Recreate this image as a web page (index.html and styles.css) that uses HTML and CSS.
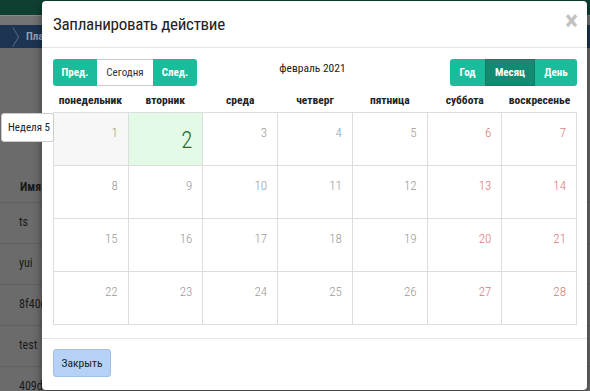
FILE: index.html
```html
<!DOCTYPE html>
<html lang="ru">
<head>
    <meta charset="UTF-8">
    <title>Запланировать действие</title>
    <link rel="stylesheet" href="styles.css">
</head>
<body>
    <!-- Page behind the dialog (dimmed) -->
    <div class="page">
        <div class="topbar"></div>
        <div class="subbar"></div>
        <div class="crumbs">
            <span class="crumb-arrow"></span>
            <span class="crumb-text">Планировщик</span>
        </div>
        <div class="list">
            <div class="list-head">Имя</div>
            <div class="list-row">ts</div>
            <div class="list-row">yui</div>
            <div class="list-row">8f40d</div>
            <div class="list-row">test</div>
            <div class="list-row">409d</div>
        </div>
    </div>

    <!-- Dialog -->
    <div class="modal">
        <div class="modal-header">
            <h4 class="modal-title">Запланировать действие</h4>
            <span class="modal-close">&times;</span>
        </div>

        <div class="modal-body">
            <div class="toolbar">
                <div class="btn-group">
                    <button class="btn btn-teal w-prev">Пред.</button>
                    <button class="btn btn-plain w-today">Сегодня</button>
                    <button class="btn btn-teal w-prev">След.</button>
                </div>
                <div class="cal-title">февраль 2021</div>
                <div class="btn-group">
                    <button class="btn btn-teal w-year">Год</button>
                    <button class="btn btn-teal active w-month">Месяц</button>
                    <button class="btn btn-teal w-day">День</button>
                </div>
            </div>

            <div class="weekdays">
                <div>понедельник</div>
                <div>вторник</div>
                <div>среда</div>
                <div>четверг</div>
                <div>пятница</div>
                <div>суббота</div>
                <div>воскресенье</div>
            </div>

            <div id="month" class="month"></div>
        </div>

        <div class="modal-footer">
            <button class="btn-close">Закрыть</button>
        </div>
    </div>

    <!-- week tooltip sits above the dialog edge -->
    <div class="week-tip">Неделя 5</div>

    <script>
        // February 2021 starts on Monday, 28 days
        const month = document.getElementById('month');
        for (let d = 1; d <= 28; d++) {
            const col = (d - 1) % 7;
            let cls = 'day';
            if (d === 1) cls += ' past';
            if (d === 2) cls += ' today';
            if (col >= 5) cls += ' weekend';
            month.innerHTML += `<div class="${cls}"><span class="num">${d}</span></div>`;
        }
    </script>
</body>
</html>
```

FILE: styles.css
```css
:root {
    --teal: #1bbc9b;
    --teal-dark: #148a73;
    --cell-border: #dddddd;
    --num: #9a9a9a;
    --weekend: #d9777a;
}

* {
    margin: 0;
    padding: 0;
    box-sizing: border-box;
}

body {
    width: 590px;
    height: 391px;
    overflow: hidden;
    position: relative;
    font-family: 'Roboto Condensed', 'Ubuntu Condensed', Roboto, 'Liberation Sans', sans-serif;
    color: #333;
    background-color: #6b6b6b;
}

/* ---------- dimmed page ---------- */

.page {
    height: 391px;
    overflow: hidden;
    background-color: #6b6b6b;
}

.topbar {
    height: 15px;
    background-color: #0f3f33;
}

.subbar {
    height: 10px;
    background-color: #737373;
    border-top: 1px solid #8a8a8a;
}

.crumbs {
    height: 23px;
    background-color: #1d3552;
    display: flex;
    align-items: center;
    color: #8fa0b5;
    font-size: 11px;
    font-weight: bold;
    padding-left: 6px;
}

.crumb-arrow {
    width: 14px;
    height: 14px;
    border-top: 1px solid #5c7591;
    border-right: 1px solid #5c7591;
    transform: scaleX(0.6) rotate(45deg);
    margin-right: 6px;
}

.list {
    padding-top: 120px;
    color: #1a1a1a;
    font-size: 12px;
}

.list-head {
    font-weight: bold;
    padding-left: 20px;
    height: 34px;
    line-height: 38px;
}

.list-row {
    height: 41px;
    line-height: 39px;
    padding-left: 19px;
    border-top: 1px solid #606060;
}

.week-tip {
    position: absolute;
    left: 1px;
    top: 113px;
    width: 53px;
    height: 29px;
    background-color: #fff;
    border: 1px solid #ccc;
    border-radius: 3px;
    font-size: 11px;
    line-height: 27px;
    padding-left: 6px;
    white-space: nowrap;
    overflow: hidden;
    color: #222;
}

/* ---------- modal ---------- */

.modal {
    position: absolute;
    left: 42px;
    top: 1px;
    width: 545px;
    height: 389px;
    background-color: #fff;
    border-radius: 4px;
    box-shadow: 0 3px 9px rgba(0, 0, 0, 0.5);
}

.modal-header {
    height: 47px;
    border-bottom: 1px solid #e5e5e5;
    display: flex;
    align-items: center;
    justify-content: space-between;
    padding: 0 9px 0 11px;
}

.modal-title {
    font-size: 17px;
    font-weight: normal;
    letter-spacing: -0.3px;
    color: #222;
    margin-top: -1px;
}

.modal-close {
    font-size: 28px;
    font-weight: bold;
    line-height: 1;
    color: #c2c2c2;
    margin-top: -7px;
}

.modal-body {
    padding: 11px 10px 13px 11px;
}

.toolbar {
    display: flex;
    align-items: flex-start;
}

.btn-group {
    display: flex;
}

.btn {
    height: 27px;
    border: none;
    font-family: inherit;
    font-size: 11px;
    padding: 0;
    text-align: center;
    cursor: pointer;
}

.w-prev { width: 44px; }
.w-today { width: 56px; }
.w-year { width: 35px; }
.w-month { width: 50px; }
.w-day { width: 42px; }

.btn-teal {
    background-color: var(--teal);
    color: #fff;
    font-weight: bold;
}

.btn-teal.active {
    background-color: var(--teal-dark);
    box-shadow: inset 0 0 0 1px #0f7a65;
}

.btn-plain {
    background-color: #fff;
    color: #333;
    border-top: 1px solid #ccc;
    border-bottom: 1px solid #ccc;
}

.btn-group .btn:first-child {
    border-radius: 3px 0 0 3px;
}

.btn-group .btn:last-child {
    border-radius: 0 3px 3px 0;
}

.cal-title {
    flex: 1;
    text-align: center;
    font-size: 11.5px;
    color: #222;
    margin-top: 2px;
    padding-right: 22px;
}

.weekdays {
    display: grid;
    grid-template-columns: repeat(7, 1fr);
    height: 25px;
    align-items: center;
    font-size: 11.5px;
    font-weight: bold;
    text-align: center;
    color: #222;
    margin-top: 1px;
}

.month {
    display: grid;
    grid-template-columns: repeat(7, 1fr);
    grid-auto-rows: 53px;
    border-top: 1px solid var(--cell-border);
    border-left: 1px solid var(--cell-border);
}

.day {
    border-right: 1px solid var(--cell-border);
    border-bottom: 1px solid var(--cell-border);
    text-align: right;
    padding: 12px 10px 0 0;
    font-size: 13px;
    font-weight: 300;
    color: var(--num);
}

.day.past {
    background-color: #f7f7f7;
}

.day.weekend {
    color: var(--weekend);
}

.day.today {
    background-color: #e3fbe6;
    color: #176f2c;
    font-size: 23px;
    font-weight: 300;
    padding-top: 19px;
    line-height: 18px;
}

.modal-footer {
    border-top: 1px solid #e5e5e5;
    padding: 10px 11px;
}

.btn-close {
    width: 58px;
    height: 28px;
    padding: 0;
    background-color: #b5d1f5;
    border: 1px solid #9fc0ec;
    border-radius: 3px;
    font-family: inherit;
    font-size: 11.5px;
    color: #222;
    cursor: pointer;
}
```
